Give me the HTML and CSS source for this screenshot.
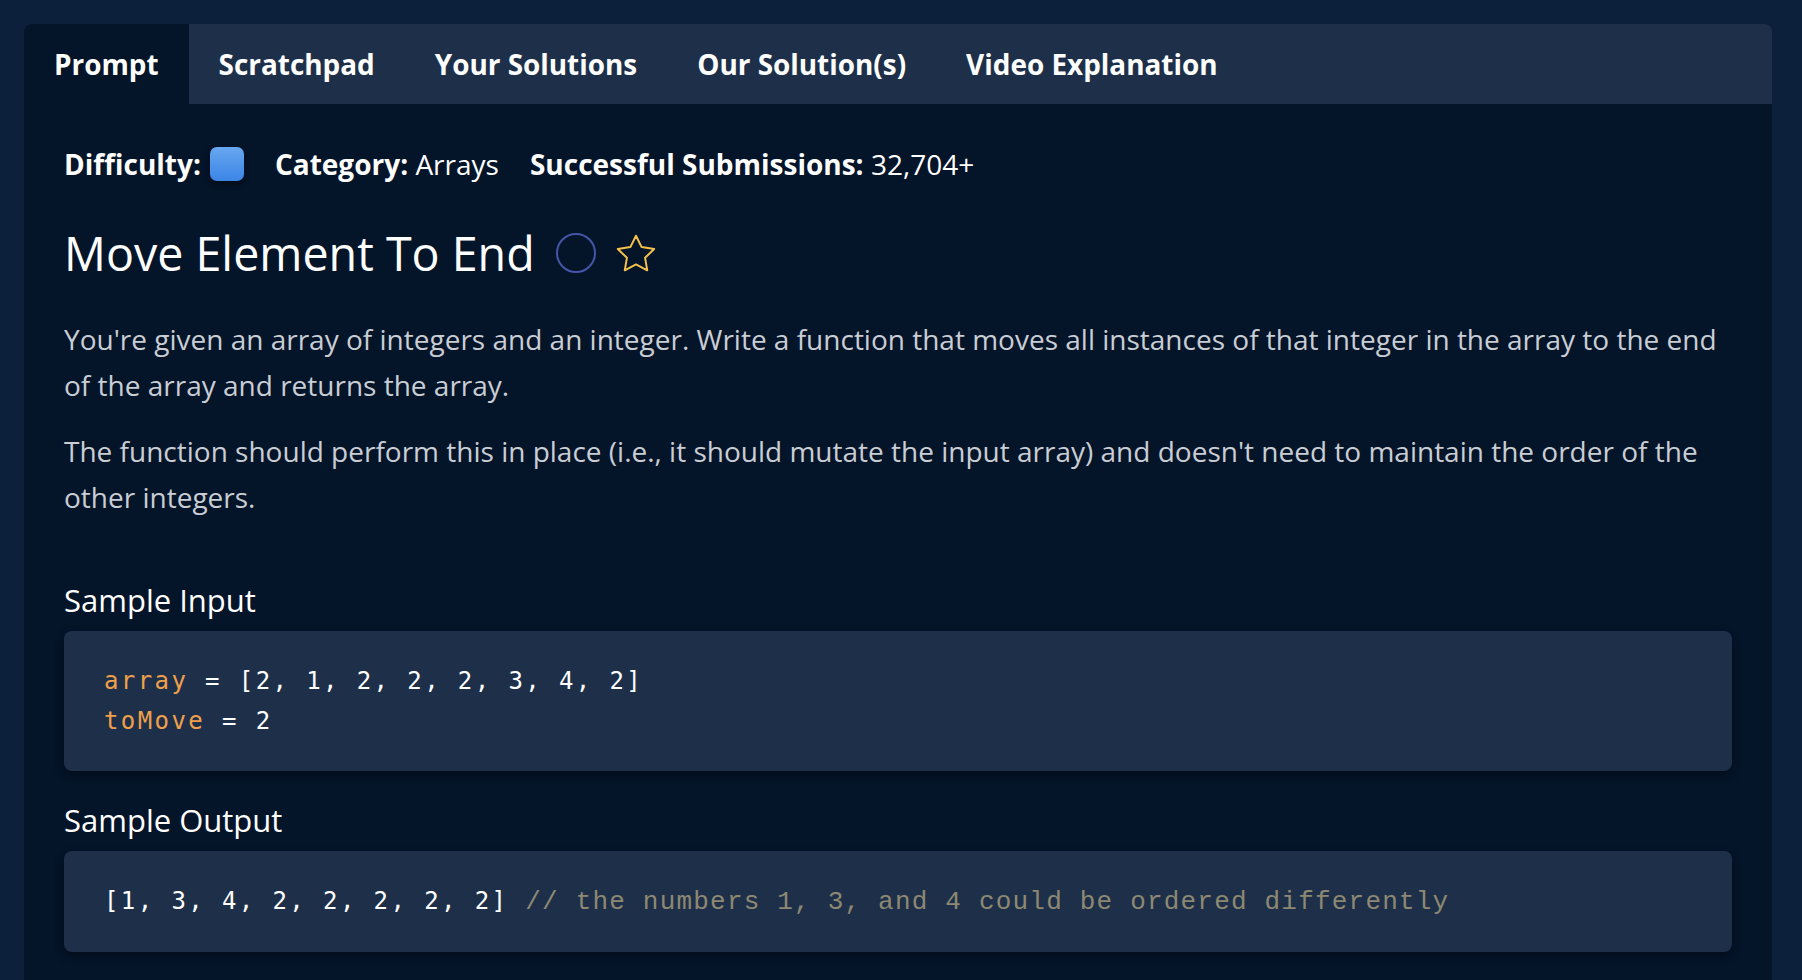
FILE: index.html
```html
<!DOCTYPE html>
<html lang="en">
<head>
<meta charset="utf-8">
<title>Move Element To End</title>
<link rel="stylesheet" href="styles.css">
</head>
<body>
<div class="panel">
  <nav class="tabs">
    <div class="tab active">Prompt</div>
    <div class="tab">Scratchpad</div>
    <div class="tab">Your Solutions</div>
    <div class="tab">Our Solution(s)</div>
    <div class="tab">Video Explanation</div>
  </nav>
  <main class="content">
    <div class="meta">
      <span class="meta-item"><b>Difficulty:</b><span class="diff-square"></span></span>
      <span class="meta-item"><b>Category:</b> Arrays</span>
      <span class="meta-item"><b>Successful Submissions:</b> 32,704+</span>
    </div>
    <h1 class="title">
      <span>Move Element To End</span>
      <svg class="icon-circle" width="40" height="40" viewBox="0 0 40 40"><circle cx="20" cy="20" r="19" fill="none" stroke="#4556a8" stroke-width="2"/></svg>
      <svg class="icon-star" width="40" height="40" viewBox="1 1 22 21"><path d="M12 2l3.09 6.26L22 9.27l-5 4.87 1.18 6.88L12 17.77l-6.18 3.25L7 14.14 2 9.27l6.91-1.01L12 2z" fill="none" stroke="#f4c14c" stroke-width="1.1" stroke-linejoin="round"/></svg>
    </h1>
    <div class="prompt-text">
      <p>You're given an array of integers and an integer. Write a function that moves all instances of that integer in the array to the end of the array and returns the array.</p>
      <p>The function should perform this in place (i.e., it should mutate the input array) and doesn't need to maintain the order of the other integers.</p>
    </div>
    <h3 class="section-title">Sample Input</h3>
    <pre class="code"><span class="var">array</span> = [2, 1, 2, 2, 2, 3, 4, 2]
<span class="var">toMove</span> = 2</pre>
    <h3 class="section-title">Sample Output</h3>
    <pre class="code"><span class="out">[1, 3, 4, 2, 2, 2, 2, 2]</span> <span class="comment">// the numbers 1, 3, and 4 could be ordered differently</span></pre>
  </main>
</div>
</body>
</html>
```
FILE: styles.css
```css
* { box-sizing: border-box; }
html, body { margin: 0; padding: 0; }
body {
  background: #0c1f3b;
  font-family: "Open Sans", "DejaVu Sans", sans-serif;
  color: #ffffff;
  height: 980px;
  overflow: hidden;
}
.panel {
  margin: 24px 30px 0 24px;
  border-radius: 8px 8px 0 0;
  overflow: hidden;
}
.tabs {
  display: flex;
  height: 80px;
  background: #1e3049;
}
.tab {
  display: flex;
  align-items: center;
  padding: 0 30px;
  font-size: 27.9px;
  font-weight: 700;
  color: #ffffff;
}
.tab.active {
  background: #041429;
}
.content {
  background: #041429;
  padding: 43px 40px 60px 40px;
  min-height: 900px;
}
.meta {
  display: flex;
  align-items: center;
  gap: 31px;
  height: 34px;
  font-size: 28px;
  color: #ffffff;
}
.meta-item {
  display: flex;
  align-items: center;
  white-space: pre;
}
.meta-item b { font-weight: 700; }
.diff-square {
  display: inline-block;
  width: 34px;
  height: 34px;
  margin-left: 9px;
  border-radius: 7px;
  background: linear-gradient(#68a7f0, #3b85e6);
  box-shadow: 0 3px 6px rgba(0, 0, 0, 0.45);
}
.title {
  display: flex;
  align-items: center;
  margin: 43px 0 0 0;
  font-size: 46.6px;
  font-weight: 400;
  line-height: 58px;
  color: #ffffff;
}
.title span { margin-right: 21px; }
.icon-circle { margin-right: 20px; }
.prompt-text {
  margin: 34px 0 60px 0;
  font-size: 28px;
  line-height: 46px;
  color: #c9cdd4;
}
.prompt-text p { margin: 0 0 20px 0; }
.section-title {
  margin: 29px 0 11px 0;
  font-size: 31px;
  font-weight: 400;
  line-height: 40px;
  color: #ffffff;
}
.code {
  margin: 0;
  padding: 30px 40px;
  background: #1e3049;
  border-radius: 8px;
  box-shadow: 0 4px 10px rgba(0, 0, 0, 0.35);
  font-family: "DejaVu Sans Mono", monospace;
  font-size: 24px;
  letter-spacing: 2.4px;
  line-height: 40px;
  color: #ffffff;
}
.var { color: #f0a04b; }
.comment {
  font-family: "Liberation Mono", "Courier New", monospace;
  color: #8d8873;
  font-size: 26px;
  letter-spacing: 1.2px;
}
```
